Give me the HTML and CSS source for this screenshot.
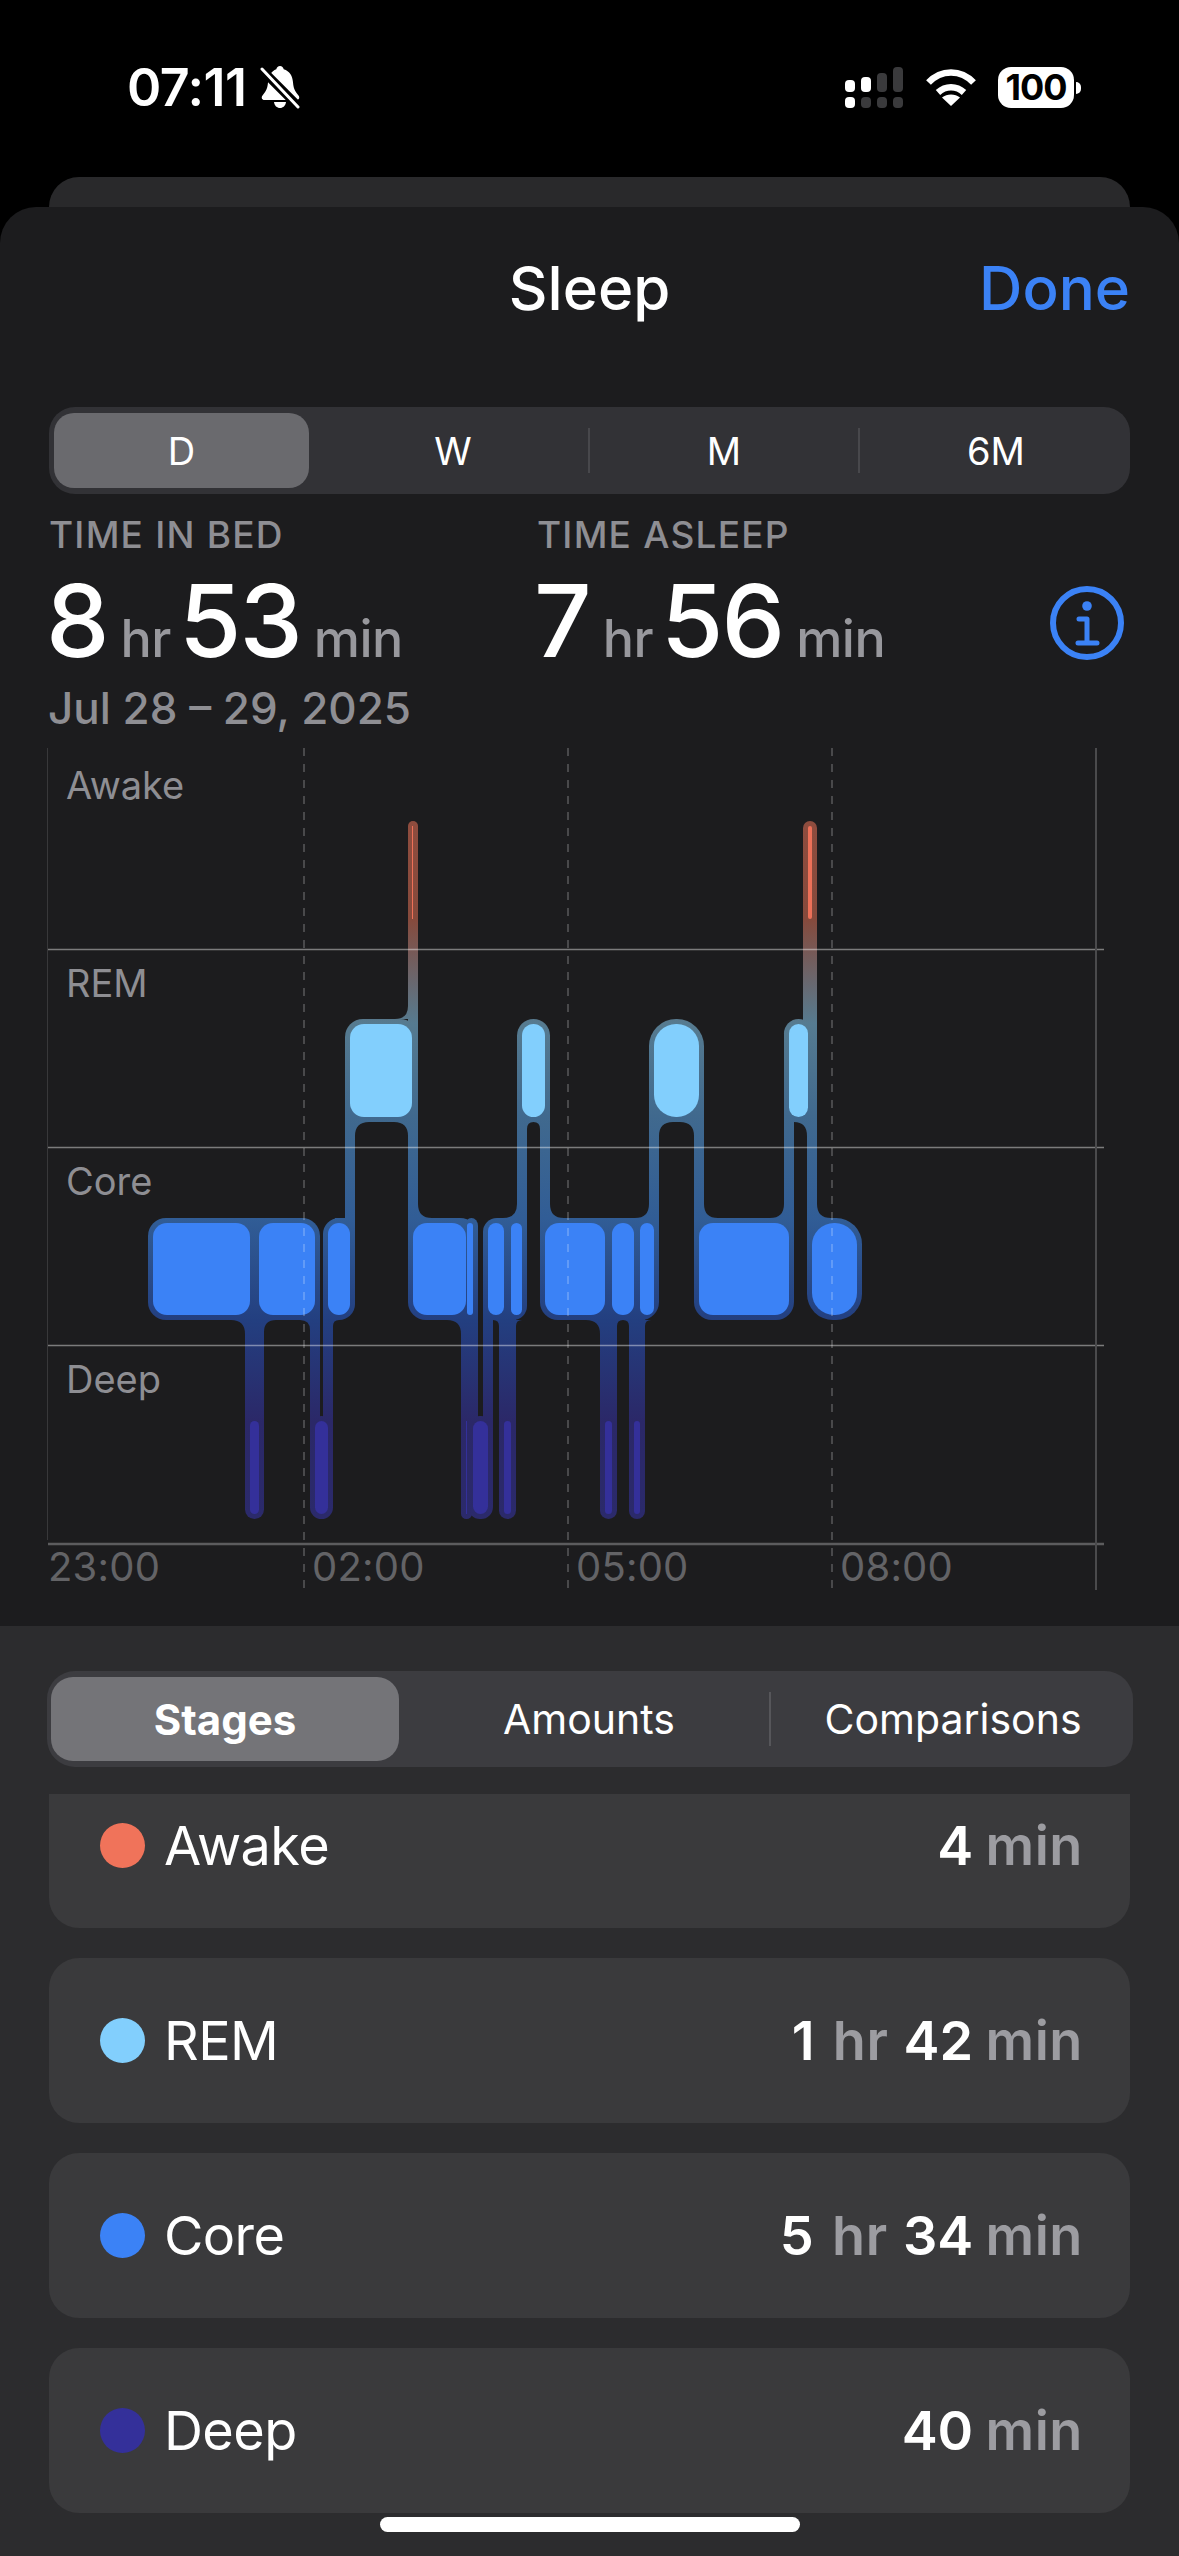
FILE: index.html
```html
<!DOCTYPE html>
<html lang="en">
<head>
<meta charset="utf-8">
<title>Sleep</title>
<link rel="stylesheet" href="styles.css">
</head>
<body>
<div class="phone">
  <header class="status">
    <div class="status-left">
      <span class="clock">07:11</span>
      <svg class="bell" viewBox="0 0 40 44" width="40" height="44">
        <path fill="#fff" d="M20 0c2 0 3.300 1.300 3.700 3.300 6 1.900 8.800 6.700 9.300 13 .4 5.500 1.600 8.700 5.500 13.200 1.500 2 .7 4.500-2 4.500H4.500c-2.700 0-3.500-2.500-2-4.500 3.900-4.500 5.100-7.700 5.500-13.200.5-6.300 3.300-11.100 8.300-13C16.700 1.300 18 0 20 0z"/>
        <path fill="#fff" d="M14 36h12c-.4 3.700-3 6-6 6s-5.600-2.300-6-6z"/>
        <path stroke="#000" stroke-width="9" d="M-2 0 42 44"/>
        <path stroke="#fff" stroke-width="3" stroke-linecap="round" d="M2 3 38 41"/>
      </svg>
    </div>
    <div class="status-right">
      <svg class="signal" viewBox="0 0 58 41" width="58" height="41">
        <rect x="0" y="13" width="10" height="12" rx="4" fill="#fff"/>
        <rect x="16" y="10" width="10" height="15" rx="4" fill="#fff"/>
        <rect x="32" y="6" width="10" height="19" rx="4" fill="#3a3a3c"/>
        <rect x="48" y="0" width="10" height="25" rx="4" fill="#3a3a3c"/>
        <rect x="0" y="30" width="10" height="11" rx="4" fill="#fff"/>
        <rect x="16" y="30" width="10" height="11" rx="4" fill="#3a3a3c"/>
        <rect x="32" y="30" width="10" height="11" rx="4" fill="#3a3a3c"/>
        <rect x="48" y="30" width="10" height="11" rx="4" fill="#3a3a3c"/>
      </svg>
      <svg class="wifi" viewBox="0 0 50 37" width="50" height="37">
        <path fill="none" stroke="#fff" stroke-width="6.500" d="M2.500 13.500C15 0 35 0 47.500 13.500"/>
        <path fill="none" stroke="#fff" stroke-width="6.500" d="M12 23.500c7.500-7 18.500-7 26 0"/>
        <path fill="#fff" d="M25 37 16 28.500c5-4 13-4 18 0z"/>
      </svg>
      <div class="battery">
        <span class="battery-body">100</span>
        <span class="battery-nub"></span>
      </div>
    </div>
  </header>

  <div class="back-card"></div>

  <main class="sheet">
    <nav class="nav">
      <span></span>
      <h1 class="title">Sleep</h1>
      <span class="done">Done</span>
    </nav>

    <div class="segments range">
      <span class="seg active">D</span>
      <span class="seg">W</span>
      <span class="seg divided">M</span>
      <span class="seg divided">6M</span>
    </div>

    <section class="stats">
      <div class="stat stat-bed">
        <div class="stat-label">TIME IN BED</div>
        <div class="stat-value"><b>8</b><i>hr</i><b>53</b><i>min</i></div>
        <div class="stat-date">Jul 28 – 29, 2025</div>
      </div>
      <div class="stat stat-asleep">
        <div class="stat-label">TIME ASLEEP</div>
        <div class="stat-value"><b>7</b><i>hr</i><b>56</b><i>min</i></div>
      </div>
      <svg class="info" viewBox="0 0 74 74" width="74" height="74">
        <circle cx="37" cy="37" r="34" fill="none" stroke="#3b82f6" stroke-width="6"/>
        <circle cx="37" cy="20" r="4.800" fill="#3b82f6"/>
        <path fill="none" stroke="#3b82f6" stroke-width="5" stroke-linecap="round" stroke-linejoin="round" d="M29 33h8v24M28 57h19"/>
      </svg>
    </section>

    <section class="chart">
      <svg class="plot" viewBox="0 748 1179 878" width="1179" height="878">
        <defs>
          <linearGradient id="band" gradientUnits="userSpaceOnUse" x1="0" y1="821" x2="0" y2="1519">
            <stop offset="0" stop-color="#8e4c3e"/>
            <stop offset=".14" stop-color="#864a3c"/>
            <stop offset=".29" stop-color="#567b90"/>
            <stop offset=".424" stop-color="#40698e"/>
            <stop offset=".569" stop-color="#315d96"/>
            <stop offset=".715" stop-color="#233f80"/>
            <stop offset=".86" stop-color="#2b2868"/>
            <stop offset="1" stop-color="#2b2a6b"/>
          </linearGradient>
        </defs>
        <g fill="url(#band)">
          <!-- core plates -->
          <rect x="148" y="1218" width="172" height="102" rx="18"/>
          <rect x="323" y="1218" width="32" height="102" rx="16"/>
          <rect x="408" y="1218" width="70" height="102" rx="18"/>
          <rect x="465" y="1218" width="13" height="102" rx="8"/>
          <rect x="483" y="1218" width="44" height="102" rx="14"/>
          <rect x="540" y="1218" width="119" height="102" rx="18"/>
          <rect x="694" y="1218" width="100" height="102" rx="18"/>
          <rect x="807" y="1218" width="55" height="102" rx="26"/>
          <!-- rem plates -->
          <rect x="345" y="1019" width="73" height="103" rx="18"/>
          <rect x="517" y="1019" width="33" height="103" rx="16.500"/>
          <rect x="649" y="1019" width="55" height="103" rx="27"/>
          <rect x="784" y="1019" width="29" height="103" rx="14.500"/>
          <!-- deep plates -->
          <rect x="245" y="1416" width="19" height="103" rx="9.500"/>
          <rect x="310" y="1416" width="23" height="103" rx="11.500"/>
          <rect x="461" y="1416" width="11" height="103" rx="5.500"/>
          <rect x="468" y="1416" width="25" height="103" rx="12"/>
          <rect x="499" y="1416" width="17" height="103" rx="8.500"/>
          <rect x="600" y="1416" width="17" height="103" rx="8.500"/>
          <rect x="629" y="1416" width="16" height="103" rx="8"/>
          <!-- awake plates and stems -->
          <rect x="408" y="821" width="10" height="420" rx="5"/>
          <rect x="803" y="821" width="14" height="240" rx="7"/>
          <!-- core to deep stems -->
          <rect x="245" y="1300" width="10" height="150"/>
          <rect x="254" y="1300" width="10" height="150"/>
          <rect x="310" y="1300" width="10" height="150"/>
          <rect x="323" y="1300" width="10" height="150"/>
          <rect x="461" y="1300" width="10" height="150"/>
          <rect x="468" y="1300" width="10" height="150"/>
          <rect x="483" y="1300" width="10" height="150"/>
          <rect x="499" y="1300" width="10" height="150"/>
          <rect x="506" y="1300" width="10" height="150"/>
          <rect x="600" y="1300" width="10" height="150"/>
          <rect x="607" y="1300" width="10" height="150"/>
          <rect x="629" y="1300" width="10" height="150"/>
          <rect x="635" y="1300" width="10" height="150"/>
          <!-- rem to core stems -->
          <rect x="345" y="1100" width="10" height="140"/>
          <rect x="517" y="1100" width="10" height="140"/>
          <rect x="540" y="1100" width="10" height="140"/>
          <rect x="649" y="1100" width="10" height="140"/>
          <rect x="694" y="1100" width="10" height="140"/>
          <rect x="784" y="1100" width="10" height="140"/>
          <rect x="807" y="1040" width="10" height="200"/>
          <!-- squared plate corners where a stem leaves the plate -->
          <rect x="345" y="1080" width="73" height="42"/>
          <rect x="517" y="1090" width="33" height="32"/>
          <rect x="649" y="1090" width="55" height="32"/>
          <rect x="784" y="1090" width="29" height="32"/>
          <rect x="335" y="1218" width="20" height="20"/>
          <rect x="408" y="1218" width="30" height="20"/>
          <rect x="505" y="1218" width="22" height="16"/>
          <rect x="540" y="1218" width="30" height="20"/>
          <rect x="630" y="1218" width="29" height="20"/>
          <rect x="694" y="1218" width="100" height="20"/>
          <rect x="807" y="1218" width="30" height="26"/>
          <rect x="295" y="1300" width="25" height="20"/>
          <rect x="323" y="1300" width="16" height="20"/>
          <rect x="450" y="1300" width="28" height="20"/>
          <rect x="483" y="1300" width="16" height="20"/>
          <!-- fillets where a stem meets a plate -->
          <path d="M245,1334Q245,1320 231,1320L245,1320Z
                   M264,1332Q264,1320 276,1320L264,1320Z
                   M310,1330Q310,1320 300,1320L310,1320Z
                   M333,1326Q333,1320 339,1320L333,1320Z
                   M461,1334Q461,1320 447,1320L461,1320Z
                   M499,1326Q499,1320 493,1320L499,1320Z
                   M516,1326Q516,1320 522,1320L516,1320Z
                   M600,1334Q600,1320 586,1320L600,1320Z
                   M617,1326Q617,1320 623,1320L617,1320Z
                   M629,1326Q629,1320 623,1320L629,1320Z
                   M645,1326Q645,1320 651,1320L645,1320Z
                   M418,1204Q418,1218 432,1218L418,1218Z
                   M517,1204Q517,1218 503,1218L517,1218Z
                   M550,1204Q550,1218 564,1218L550,1218Z
                   M649,1204Q649,1218 635,1218L649,1218Z
                   M704,1204Q704,1218 718,1218L704,1218Z
                   M784,1204Q784,1218 770,1218L784,1218Z
                   M817,1204Q817,1218 831,1218L817,1218Z
                   M355,1136Q355,1122 369,1122L355,1122Z
                   M408,1136Q408,1122 394,1122L408,1122Z
                   M527,1129Q527,1122 533.500,1122L527,1122Z
                   M540,1129Q540,1122 533.500,1122L540,1122Z
                   M659,1136Q659,1122 673,1122L659,1122Z
                   M694,1136Q694,1122 680,1122L694,1122Z
                   M807,1136Q807,1122 794,1122L807,1122Z
                   M408,1006Q408,1019 395,1019L408,1019Z"/>
        </g>
        <g class="core-bars">
          <rect x="153" y="1223" width="97" height="92" rx="14"/>
          <rect x="259" y="1223" width="56" height="92" rx="14"/>
          <rect x="328" y="1223" width="22" height="92" rx="11"/>
          <rect x="413" y="1223" width="53" height="92" rx="14"/>
          <rect x="467" y="1223" width="6" height="92" rx="3"/>
          <rect x="488" y="1223" width="16" height="92" rx="8"/>
          <rect x="511" y="1223" width="11" height="92" rx="5.500"/>
          <rect x="545" y="1223" width="60" height="92" rx="14"/>
          <rect x="612" y="1223" width="22" height="92" rx="11"/>
          <rect x="640" y="1223" width="14" height="92" rx="7"/>
          <rect x="699" y="1223" width="90" height="92" rx="14"/>
          <rect x="812" y="1223" width="45" height="92" rx="22"/>
        </g>
        <g class="rem-bars">
          <rect x="350" y="1024" width="62" height="93" rx="14"/>
          <rect x="522" y="1024" width="23" height="93" rx="11.500"/>
          <rect x="654" y="1024" width="45" height="93" rx="22"/>
          <rect x="789" y="1024" width="19" height="93" rx="9.500"/>
        </g>
        <g class="deep-bars">
          <rect x="250" y="1421" width="9" height="93" rx="4.500"/>
          <rect x="315" y="1421" width="13" height="93" rx="6.500"/>
          <rect x="466" y="1421" width="1" height="93"/>
          <rect x="473" y="1421" width="15" height="93" rx="7.500"/>
          <rect x="504" y="1421" width="7" height="93" rx="3.500"/>
          <rect x="605" y="1421" width="7" height="93" rx="3.500"/>
          <rect x="634" y="1421" width="6" height="93" rx="3"/>
        </g>
        <g class="awake-bars">
          <rect x="412" y="826" width="1" height="93"/>
          <rect x="808" y="826" width="4" height="93" rx="2"/>
        </g>
        <g class="grid-h">
          <path d="M48 949.500H1104M48 1147.500H1104M48 1345.500H1104"/>
        </g>
        <path class="grid-base" d="M48 1544H1104"/>
        <path class="grid-left" d="M47.500 748V1540"/>
        <path class="grid-dash" d="M304 748V1590M568 748V1590M832 748V1590"/>
        <path class="grid-right" d="M1096 748V1590"/>
      </svg>
      <div class="rows">
        <div class="row-label">Awake</div>
        <div class="row-label">REM</div>
        <div class="row-label">Core</div>
        <div class="row-label">Deep</div>
      </div>
      <div class="axis">
        <span>23:00</span>
        <span>02:00</span>
        <span>05:00</span>
        <span>08:00</span>
      </div>
    </section>
  </main>

  <section class="panel">
    <div class="segments views">
      <span class="seg active">Stages</span>
      <span class="seg">Amounts</span>
      <span class="seg divided">Comparisons</span>
    </div>
    <div class="list">
      <div class="card">
        <span class="dot dot-awake"></span>
        <span class="card-name">Awake</span>
        <span class="card-value"><b>4</b> <i>min</i></span>
      </div>
      <div class="card">
        <span class="dot dot-rem"></span>
        <span class="card-name">REM</span>
        <span class="card-value"><b>1</b> <i>hr</i> <b>42</b> <i>min</i></span>
      </div>
      <div class="card">
        <span class="dot dot-core"></span>
        <span class="card-name">Core</span>
        <span class="card-value"><b>5</b> <i>hr</i> <b>34</b> <i>min</i></span>
      </div>
      <div class="card">
        <span class="dot dot-deep"></span>
        <span class="card-name">Deep</span>
        <span class="card-value"><b>40</b> <i>min</i></span>
      </div>
    </div>
    <div class="home-bar"></div>
  </section>
</div>
</body>
</html>
```
FILE: styles.css
```css
* { box-sizing: border-box; }
html, body { margin: 0; padding: 0; background: #000; }
.phone {
  width: 1179px;
  height: 2556px;
  overflow: hidden;
  display: flex;
  flex-direction: column;
  background: #000;
  color: #fff;
  font-family: "Inter", "Liberation Sans", sans-serif;
}

/* status bar */
.status {
  height: 177px;
  flex: none;
  display: flex;
  justify-content: space-between;
  padding: 67px 98px 0 127px;
  align-items: flex-start;
}
.status-left { display: flex; align-items: center; gap: 13px; height: 42px; }
.clock { font-size: 52px; font-weight: 600; line-height: 42px; letter-spacing: -.5px; }
.bell { display: block; }
.status-right { display: flex; align-items: flex-start; height: 42px; }
.signal { display: block; margin-right: 23px; }
.wifi { display: block; margin-top: 2px; margin-right: 22px; }
.battery { display: flex; align-items: center; }
.battery-body {
  width: 76px;
  height: 41px;
  border-radius: 13px;
  background: #fff;
  color: #000;
  font-size: 36px;
  font-weight: 700;
  line-height: 41px;
  text-align: center;
  letter-spacing: -1px;
}
.battery-nub {
  width: 5px;
  height: 12px;
  margin-left: 2px;
  background: #fff;
  border-radius: 0 6px 6px 0;
}

.back-card {
  height: 30px;
  flex: none;
  margin: 0 49px;
  background: #29292b;
  border-radius: 30px 30px 0 0;
}

/* sheet */
.sheet {
  height: 1419px;
  flex: none;
  background: #1c1c1e;
  border-radius: 36px 36px 0 0;
}
.nav {
  height: 200px;
  display: grid;
  grid-template-columns: 1fr auto 1fr;
  align-items: start;
  padding: 45px 49px 0;
}
.title { margin: 0; font-size: 60px; font-weight: 550; line-height: 72px; }
.done { justify-self: end; font-size: 60px; font-weight: 500; line-height: 72px; color: #3b82f6; }

/* segmented controls */
.segments { display: flex; position: relative; }
.seg { flex: 1; display: flex; align-items: center; justify-content: center; position: relative; }
.seg.divided::before {
  content: "";
  position: absolute;
  left: 0;
  width: 2px;
  background: #48484c;
}
.range {
  height: 87px;
  margin: 0 49px;
  padding: 6px 5px;
  background: #323236;
  border-radius: 26px;
  font-size: 38px;
  font-weight: 400;
}
.range .seg { height: 75px; }
.range .seg.active { background: #6a6a6e; border-radius: 20px; flex: none; width: 255px; margin-right: 9px; }
.range .seg { width: 270px; flex: none; }
.range .seg:nth-child(3) { padding-left: 2px; }
.range .seg:nth-child(4) { padding-left: 6px; }
.range .seg.divided::before { top: 15px; height: 45px; }

/* stats */
.stats { height: 254px; position: relative; display: flex; padding: 25px 0 0 49px; }
.stat-label { font-size: 37px; font-weight: 500; line-height: 32px; color: #8e8e93; letter-spacing: 1.200px; }
.stat-bed { width: 488px; }
.stat-value { height: 95px; margin: 22px 0 0 -3px; display: flex; align-items: baseline; line-height: 95px; }
.stat-value b { font-size: 101px; font-weight: 500; letter-spacing: -2px; }
.stat-value i { font-style: normal; font-size: 52px; font-weight: 500; color: #98989d; margin: 0 8px 0 13px; letter-spacing: -.5px; }
.stat-date { font-size: 44px; font-weight: 500; line-height: 44px; color: #8e8e93; margin: 18px 0 0 -1px; }
.info { position: absolute; left: 1050px; top: 92px; }

/* chart */
.chart { height: 878px; position: relative; }
.plot { position: absolute; left: 0; top: 0; display: block; }
.core-bars { fill: #3b82f6; }
.rem-bars { fill: #82cffd; }
.deep-bars { fill: #34309a; }
.awake-bars { fill: #ed7058; }
.grid-h { fill: none; stroke: rgba(255, 255, 255, .42); stroke-width: 1.500px; }
.grid-base { fill: none; stroke: #5c5c5e; stroke-width: 2.500px; }
.grid-left { fill: none; stroke: #38383a; stroke-width: 1px; }
.grid-dash { fill: none; stroke: rgba(255, 255, 255, .2); stroke-width: 2px; stroke-dasharray: 8 8; }
.grid-right { fill: none; stroke: #4a4a4c; stroke-width: 2px; }
.rows { position: relative; padding-left: 66px; display: flex; flex-direction: column; padding-top: 18px; }
.row-label { height: 198px; font-size: 38px; line-height: 38px; color: #8e8e93; }
.axis {
  position: absolute;
  left: 48px;
  top: 799px;
  display: flex;
  font-size: 40px;
  line-height: 40px;
  letter-spacing: .2px;
  color: #636366;
}
.axis span { width: 264px; }

/* panel */
.panel { flex: 1; background: #2c2c2e; padding-top: 45px; position: relative; }
.views {
  height: 96px;
  margin: 0 46px 0 47px;
  padding: 6px 4px;
  background: #3c3c40;
  border-radius: 28px;
  font-size: 41px;
}
.views .seg { height: 84px; flex: none; }
.views .seg:nth-child(1) { width: 348px; }
.views .seg:nth-child(2) { width: 370px; padding-left: 10px; }
.views .seg:nth-child(3) { width: 360px; padding-left: 8px; }
.views .seg.active { background: #747478; border-radius: 22px; font-weight: 700; font-size: 42px; }
.views .seg.divided::before { top: 15px; height: 54px; background: #56565a; }
.list {
  margin: 27px 49px 0;
  height: 732px;
  overflow: hidden;
  display: flex;
  flex-direction: column;
  gap: 30px;
}
.card {
  height: 165px;
  flex: none;
  display: flex;
  align-items: center;
  padding: 0 47px 0 51px;
  background: #3a3a3c;
  border-radius: 30px;
}
.card:first-child { margin-top: -31px; }
.dot { width: 45px; height: 45px; border-radius: 50%; flex: none; }
.dot-awake { background: #f0735a; }
.dot-rem { background: #82cffd; }
.dot-core { background: #3b82f6; }
.dot-deep { background: #34309a; }
.card-name { margin-left: 19px; font-size: 54px; font-weight: 400; flex: 1; letter-spacing: -.6px; }
.card-value { font-size: 54px; }
.card-value b { font-weight: 600; }
.card-value i { font-style: normal; font-weight: 600; color: #9c9ca1; letter-spacing: .6px; }
.card-value i:last-child { margin-left: -3px; }
.card-value i:not(:last-child) { margin-left: 3px; }
.home-bar {
  position: absolute;
  left: 380px;
  top: 891px;
  width: 420px;
  height: 15px;
  border-radius: 8px;
  background: #fff;
}
```
